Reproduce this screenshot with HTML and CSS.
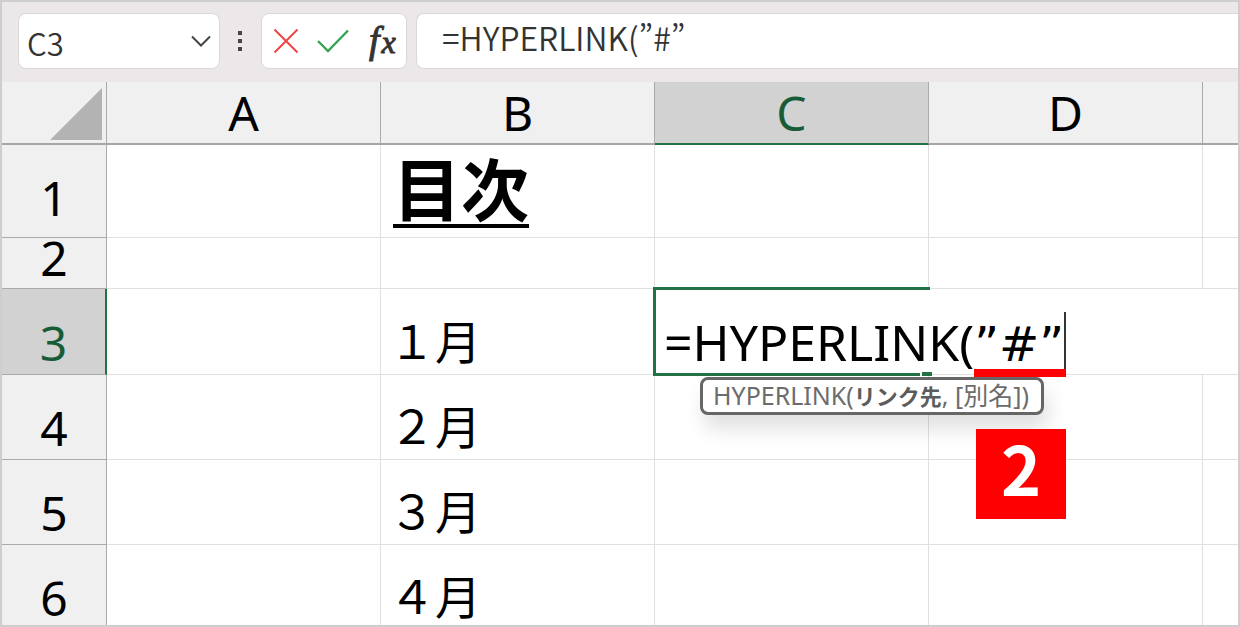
FILE: index.html
```html
<!DOCTYPE html>
<html lang="ja">
<head>
  <meta charset="UTF-8">
  <meta name="viewport" content="width=device-width, initial-scale=1.0">
  <title>目次</title>
  <link rel="stylesheet" href="styles.css">
</head>
<body>
  <div class="window">

    <!-- 数式バー -->
    <div class="formula-bar">
      <div class="box name-box">
        <input class="name-input" type="text" value="C3" aria-label="名前ボックス">
        <button class="icon-btn" type="button" aria-label="名前の一覧">
          <svg width="20" height="12" viewBox="0 0 20 12"><path d="M1 1.5L10 10.5L19 1.5" fill="none" stroke="#444" stroke-width="2"/></svg>
        </button>
      </div>
      <svg class="dots" width="6" height="22" viewBox="0 0 6 22"><path d="M1 1h4v4h-4zM1 9h4v4h-4zM1 17h4v4h-4z" fill="#444"/></svg>
      <div class="box tools">
        <button class="icon-btn" type="button" aria-label="キャンセル">
          <svg width="26" height="26" viewBox="0 0 26 26"><path d="M1.500 1.500L24.500 24.500M24.500 1.500L1.500 24.500" fill="none" stroke="#f04444" stroke-width="2"/></svg>
        </button>
        <button class="icon-btn" type="button" aria-label="入力">
          <svg width="32" height="24" viewBox="0 0 32 24"><path d="M1 12L11 22L31 1.500" fill="none" stroke="#36a355" stroke-width="2.400"/></svg>
        </button>
        <button class="icon-btn fx" type="button" aria-label="関数の挿入"><span class="fx-f">f</span><span class="fx-x">x</span></button>
      </div>
      <input class="box formula-input" type="text" value="=HYPERLINK(”#”" aria-label="数式バー">
    </div>

    <!-- シート -->
    <table class="sheet">
      <colgroup>
        <col class="col-head"><col class="col"><col class="col"><col class="col"><col class="col"><col>
      </colgroup>
      <thead>
        <tr>
          <th class="corner"><svg width="52" height="52" viewBox="0 0 52 52"><path d="M52 0V52H0z" fill="#b3b3b3"/></svg></th>
          <th scope="col">A</th>
          <th scope="col">B</th>
          <th scope="col" class="selected">C</th>
          <th scope="col">D</th>
          <th></th>
        </tr>
      </thead>
      <tbody>
        <tr class="row-title">
          <th scope="row">1</th><td></td><td class="title">目次</td><td></td><td></td><td></td>
        </tr>
        <tr class="row-small">
          <th scope="row">2</th><td></td><td></td><td></td><td></td><td></td>
        </tr>
        <tr class="row-active">
          <th scope="row" class="selected">3</th>
          <td></td>
          <td>１月</td>
          <td class="editing" colspan="3">
            <div class="cell-frame"></div>
            <div class="cell-editor" role="textbox" aria-label="C3">=HYPERLINK(<span class="marked">”#”</span></div>
            <div class="hint">HYPERLINK(<b>リンク先</b>, [別名])</div>
            <div class="step">2</div>
          </td>
        </tr>
        <tr>
          <th scope="row">4</th><td></td><td>２月</td><td></td><td></td><td></td>
        </tr>
        <tr>
          <th scope="row">5</th><td></td><td>３月</td><td></td><td></td><td></td>
        </tr>
        <tr>
          <th scope="row">6</th><td></td><td>４月</td><td></td><td></td><td></td>
        </tr>
      </tbody>
    </table>
  </div>
</body>
</html>
```
FILE: styles.css
```css
* {
  box-sizing: border-box;
}

body {
  margin: 0;
  font-family: "Noto Sans", "Noto Sans CJK JP", sans-serif;
  color: #000;
}

.window {
  height: 100vh;
  overflow: hidden;
  border: 2px solid #cecece;
  background: #fff;
}

/* 数式バー */
.formula-bar {
  display: flex;
  align-items: center;
  height: 80px;
  padding: 10px 0 12px 16px;
  background: #ece8ea;
}

.box {
  height: 56px;
  background: #fff;
  border: 1px solid #dcd8da;
  border-radius: 8px;
}

.name-box {
  display: flex;
  align-items: center;
  width: 202px;
  padding: 0 8px;
}

.name-input {
  flex: 1;
  min-width: 0;
  padding: 2px 0 0;
  border: 0;
  outline: 0;
  background: none;
  color: #333;
  font: 350 31px "Noto Sans CJK JP", sans-serif;
}

.icon-btn {
  display: flex;
  align-items: center;
  padding: 0;
  border: 0;
  background: none;
  cursor: pointer;
}

.dots {
  margin: 0 18px 0 17px;
}

.tools {
  display: flex;
  align-items: center;
  gap: 18px;
  width: 146px;
  padding: 0 8px 0 11px;
  margin-right: 9px;
}

.fx {
  align-items: baseline;
  gap: 2px;
  padding-left: 2px;
  color: #333;
  font: italic 38px/40px "Liberation Serif", serif;
  -webkit-text-stroke: 1px #333;
}

.fx-x {
  font-size: 32px;
}

.formula-input {
  flex: 1;
  min-width: 0;
  padding: 0 0 8px 25px;
  border-right: 0;
  border-radius: 8px 0 0 8px;
  outline: 0;
  color: #333;
  font: 350 32px "Noto Sans CJK JP", sans-serif;
}

/* シート */
.sheet {
  width: 100%;
  table-layout: fixed;
  border-collapse: separate;
  border-spacing: 0;
}

.col-head {
  width: 105px;
}

.col {
  width: 274px;
}

th,
td {
  height: 85px;
  padding: 0;
  border-right: 1px solid #e0e0e0;
  border-bottom: 1px solid #e0e0e0;
  vertical-align: bottom;
  white-space: nowrap;
}

th {
  background: #f0f0f0;
  border-color: #aaa;
  font-size: 48px;
  font-weight: 400;
  line-height: 62px;
}

td {
  padding: 0 0 4px 8px;
  font-size: 46px;
  line-height: 62px;
  font-family: "Noto Sans CJK JP", sans-serif;
}

thead th {
  height: 63px;
  border-bottom: 2px solid #a6a6a6;
  line-height: 60px;
}

.corner {
  padding: 0 4px 3px 0;
  text-align: right;
  line-height: 0;
}

th.selected {
  background: #d2d2d2;
  color: #185c37;
}

thead .selected {
  border-bottom-color: #217346;
}

tbody .selected {
  border-right: 2px solid #217346;
}

tr > :last-child {
  border-right: 0;
}

.row-title > * {
  height: 93px;
}

.row-title th {
  padding-bottom: 8px;
}

.row-small > * {
  height: 51px;
}

.row-small th {
  padding-bottom: 10px;
  line-height: 40px;
}

.row-active > * {
  height: 86px;
}

.row-title .title {
  padding: 0 0 8px 12px;
  font-size: 68px;
  font-weight: 700;
  line-height: 84px;
  text-decoration: underline;
  text-decoration-thickness: 4px;
  text-underline-offset: 8px;
}

/* 編集中のセル */
.row-active .editing {
  position: relative;
  padding: 0 0 0 9px;
}

.cell-frame {
  position: absolute;
  top: -2px;
  left: -2px;
  width: 277px;
  height: 89px;
  border: 3px solid #217346;
  border-right: 0;
}

.cell-frame::after {
  content: "";
  position: absolute;
  right: -2px;
  bottom: -3px;
  width: 10px;
  height: 4px;
  background: #217346;
  border-left: 2px solid #fff;
}

.cell-editor {
  display: inline-block;
  border-right: 2px solid #333;
  font: 50px/60px "Noto Sans", sans-serif;
}

.marked {
  position: relative;
  display: inline-block;
  font: 48px/60px "DejaVu Sans", sans-serif;
}

.marked::after {
  content: "";
  position: absolute;
  left: 0;
  right: -2px;
  bottom: -3px;
  height: 8px;
  background: #f00;
}

.hint {
  position: absolute;
  top: 88px;
  left: 45px;
  padding: 0 12px 0 10px;
  border: 3px solid #666;
  border-radius: 8px;
  background: #fff;
  box-shadow: 4px 14px 20px rgba(0, 0, 0, 0.12);
  color: #6c6c6c;
  font: 400 25px/31px "Noto Sans", "Noto Sans CJK JP", sans-serif;
}

.hint b {
  color: #5c5c5c;
  font-size: 22px;
  font-weight: 700;
}

.step {
  position: absolute;
  top: 140px;
  left: 321px;
  width: 90px;
  height: 90px;
  background: #f00;
  color: #fff;
  font: 700 68px/76px "Noto Sans CJK JP", sans-serif;
  text-align: center;
}
```
